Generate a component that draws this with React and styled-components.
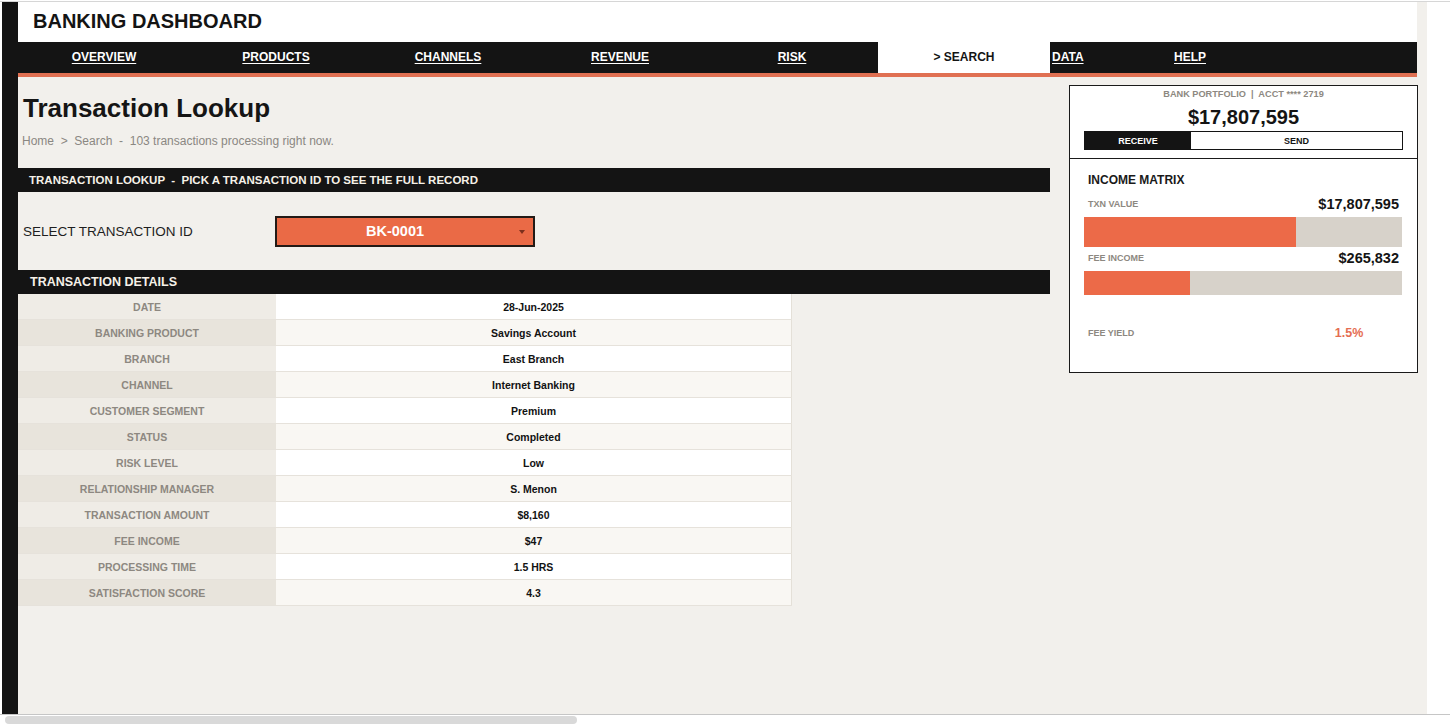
import React from "react";
import styled, { createGlobalStyle } from "styled-components";

const GlobalStyle = createGlobalStyle`
  html, body { margin: 0; padding: 0; background: #ffffff; }
  body { font-family: "Liberation Sans", Arial, sans-serif; color: #141414; }
  * { box-sizing: border-box; }
`;

const Frame = styled.div`
  width: 1450px;
  height: 725px;
  display: flex;
  flex-direction: column;
  overflow: hidden;
  background: #fff;
`;
const TopRule = styled.div`
  height: 2px;
  border-bottom: 1px solid #d6d6d6;
`;
const Workspace = styled.div`
  flex: 1;
  display: flex;
  min-height: 0;
`;
const Gutter = styled.div`
  width: 2px;
  background: #fff;
`;
const Strip = styled.div`
  width: 16px;
  background: #141414;
`;
const Sheet = styled.div`
  width: 1409px;
  background: #f2f0ec;
  display: flex;
  flex-direction: column;
`;
const RightGutter = styled.div`
  flex: 1;
  background: #fff;
`;
const Scroll = styled.div`
  height: 11px;
  border-top: 1px solid #c6c6c6;
  padding: 1px 0 0 5px;
`;
const Thumb = styled.div`
  width: 572px;
  height: 8px;
  border-radius: 4px;
  background: #d9d9d9;
`;

const Header = styled.div`
  width: 1399px;
  height: 40px;
  background: #fff;
  display: flex;
  align-items: center;
  padding: 0 0 2px 15px;
  font-size: 20px;
  font-weight: 700;
  color: #141414;
`;

const Nav = styled.nav`
  width: 1399px;
  height: 35px;
  background: #141414;
  border-bottom: 4px solid #e07052;
  display: flex;
`;
const NavItem = styled.a`
  width: ${({ $w }) => $w}px;
  display: flex;
  align-items: center;
  justify-content: ${({ $left }) => ($left ? "flex-start" : "center")};
  padding: 0 0 2px ${({ $left }) => ($left ? "2px" : "0")};
  font-size: 12px;
  font-weight: 700;
  color: ${({ $active }) => ($active ? "#141414" : "#ffffff")};
  background: ${({ $active }) => ($active ? "#ffffff" : "transparent")};
  text-decoration: ${({ $active }) => ($active ? "none" : "underline")};
  text-underline-offset: 2px;
`;

const Body = styled.div`
  display: flex;
  align-items: flex-start;
`;
const Main = styled.div`
  width: 1032px;
  display: flex;
  flex-direction: column;
`;
const Title = styled.h1`
  margin: 16px 0 0 5px;
  font-size: 26px;
  line-height: 30px;
  font-weight: 700;
  color: #151515;
`;
const Crumbs = styled.div`
  margin: 10px 0 0 4px;
  font-size: 12px;
  line-height: 16px;
  color: #8a8782;
  white-space: pre;
`;
const SectionBar = styled.div`
  height: 24px;
  background: #141414;
  color: #f6f1e8;
  display: flex;
  align-items: center;
  padding-left: ${({ $pad }) => $pad}px;
  font-size: ${({ $size }) => $size}px;
  font-weight: 700;
  white-space: pre;
  margin-top: ${({ $top }) => $top || 0}px;
`;
const SelectRow = styled.div`
  height: 78px;
  display: flex;
  align-items: center;
  padding: 1px 0 0 5px;
`;
const SelectLabel = styled.div`
  width: 252px;
  font-size: 13.5px;
  color: #1e1e1e;
`;
const Dropdown = styled.div`
  position: relative;
  width: 260px;
  height: 31px;
  background: #ea6a46;
  border: 2px solid #231a16;
  display: flex;
  align-items: center;
  justify-content: center;
  color: #fff;
  font-size: 14.5px;
  font-weight: 700;
  padding: 0 20px 1px 0;
`;
const Caret = styled.span`
  position: absolute;
  right: 8px;
  top: 12px;
  width: 0;
  height: 0;
  border-left: 3.5px solid transparent;
  border-right: 3.5px solid transparent;
  border-top: 4px solid #7c2f1c;
`;

const Table = styled.div`
  width: 774px;
  display: flex;
  flex-direction: column;
`;
const Row = styled.div`
  display: grid;
  grid-template-columns: 258px 516px;
  height: 26px;
  border-bottom: 1px solid #e6e2db;
`;
const Label = styled.div`
  background: ${({ $alt }) => ($alt ? "#e8e4dc" : "#efece6")};
  display: flex;
  align-items: center;
  justify-content: center;
  font-size: 10.5px;
  font-weight: 700;
  color: #8d8881;
`;
const Value = styled.div`
  background: ${({ $alt }) => ($alt ? "#f9f7f3" : "#ffffff")};
  border-right: 1px solid #e4e0d8;
  display: flex;
  align-items: center;
  justify-content: center;
  font-size: 10.5px;
  font-weight: 700;
  color: #121212;
`;

const Side = styled.aside`
  width: 349px;
  margin: 8px 0 0 19px;
  border: 1px solid #1a1a1a;
  background: #fff;
`;
const CardTop = styled.div`
  padding: 2px 0 8px 14px;
  display: flex;
  flex-direction: column;
  align-items: center;
  width: 333px;
`;
const Eyebrow = styled.div`
  font-size: 9.2px;
  line-height: 12px;
  font-weight: 700;
  color: #8d8881;
  white-space: pre;
`;
const Big = styled.div`
  margin-top: 5px;
  font-size: 20px;
  line-height: 24px;
  font-weight: 700;
  color: #141414;
`;
const Toggle = styled.div`
  margin-top: 2px;
  width: 319px;
  height: 19px;
  display: grid;
  grid-template-columns: 106px 1fr;
  border: 1px solid #141414;
`;
const ToggleBtn = styled.div`
  display: flex;
  align-items: center;
  justify-content: center;
  font-size: 9px;
  font-weight: 700;
  background: ${({ $on }) => ($on ? "#141414" : "#fff")};
  color: ${({ $on }) => ($on ? "#fff" : "#141414")};
`;
const Matrix = styled.div`
  border-top: 1px solid #1a1a1a;
  padding: 13px 15px 31px 14px;
  display: flex;
  flex-direction: column;
`;
const MatrixTitle = styled.div`
  padding-left: 4px;
  font-size: 12px;
  line-height: 16px;
  font-weight: 700;
  color: #1a1a1a;
`;
const MetricRow = styled.div`
  display: flex;
  align-items: center;
  justify-content: space-between;
  padding: 0 3px 0 4px;
  margin-top: ${({ $top }) => $top}px;
`;
const MetricLabel = styled.div`
  flex: ${({ $grow }) => ($grow ? 1 : "none")};
  font-size: 9px;
  font-weight: 700;
  color: #8d8881;
`;
const MetricValue = styled.div`
  font-size: 14.5px;
  line-height: 18px;
  font-weight: 700;
  color: #141414;
`;
const Track = styled.div`
  height: ${({ $h }) => $h}px;
  margin-top: ${({ $top }) => $top}px;
  background: #d7d2ca;
`;
const Fill = styled.div`
  height: 100%;
  background: #ec6a48;
`;
const YieldRow = styled.div`
  display: flex;
  align-items: center;
  padding: 0 3px 0 4px;
  margin-top: 30px;
`;
const YieldValue = styled.div`
  width: 100px;
  text-align: center;
  font-size: 12.5px;
  line-height: 16px;
  font-weight: 700;
  color: #e56d52;
`;

const navItems = [
  { t: "OVERVIEW", w: 172 },
  { t: "PRODUCTS", w: 172 },
  { t: "CHANNELS", w: 172 },
  { t: "REVENUE", w: 172 },
  { t: "RISK", w: 172 },
  { t: "> SEARCH", w: 172, active: true },
  { t: "DATA", w: 70, left: true },
  { t: "HELP", w: 140 },
];

const details = [
  ["DATE", "28-Jun-2025"],
  ["BANKING PRODUCT", "Savings Account"],
  ["BRANCH", "East Branch"],
  ["CHANNEL", "Internet Banking"],
  ["CUSTOMER SEGMENT", "Premium"],
  ["STATUS", "Completed"],
  ["RISK LEVEL", "Low"],
  ["RELATIONSHIP MANAGER", "S. Menon"],
  ["TRANSACTION AMOUNT", "$8,160"],
  ["FEE INCOME", "$47"],
  ["PROCESSING TIME", "1.5 HRS"],
  ["SATISFACTION SCORE", "4.3"],
];

const txnValue = 17807595;
const feeIncome = 265832;

export default function App() {
  return (
    <>
      <GlobalStyle />
      <Frame>
        <TopRule />
        <Workspace>
          <Gutter />
          <Strip />
          <Sheet>
            <Header>BANKING DASHBOARD</Header>
            <Nav>
              {navItems.map((n) => (
                <NavItem key={n.t} $w={n.w} $active={n.active} $left={n.left}>
                  {n.t}
                </NavItem>
              ))}
            </Nav>
            <Body>
              <Main>
                <Title>Transaction Lookup</Title>
                <Crumbs>Home  &gt;  Search  -  103 transactions processing right now.</Crumbs>
                <SectionBar $pad={11} $size={11.5} $top={19}>
                  TRANSACTION LOOKUP  -  PICK A TRANSACTION ID TO SEE THE FULL RECORD
                </SectionBar>
                <SelectRow>
                  <SelectLabel>SELECT TRANSACTION ID</SelectLabel>
                  <Dropdown>
                    BK-0001
                    <Caret />
                  </Dropdown>
                </SelectRow>
                <SectionBar $pad={12} $size={12.5}>
                  TRANSACTION DETAILS
                </SectionBar>
                <Table>
                  {details.map(([k, v], i) => (
                    <Row key={k}>
                      <Label $alt={i % 2 === 1}>{k}</Label>
                      <Value $alt={i % 2 === 1}>{v}</Value>
                    </Row>
                  ))}
                </Table>
              </Main>
              <Side>
                <CardTop>
                  <Eyebrow>BANK PORTFOLIO  |  ACCT **** 2719</Eyebrow>
                  <Big>$17,807,595</Big>
                  <Toggle>
                    <ToggleBtn $on>RECEIVE</ToggleBtn>
                    <ToggleBtn>SEND</ToggleBtn>
                  </Toggle>
                </CardTop>
                <Matrix>
                  <MatrixTitle>INCOME MATRIX</MatrixTitle>
                  <MetricRow $top={7}>
                    <MetricLabel>TXN VALUE</MetricLabel>
                    <MetricValue>${txnValue.toLocaleString("en-US")}</MetricValue>
                  </MetricRow>
                  <Track $h={30} $top={4}>
                    <Fill style={{ width: "66.7%" }} />
                  </Track>
                  <MetricRow $top={2}>
                    <MetricLabel>FEE INCOME</MetricLabel>
                    <MetricValue>${feeIncome.toLocaleString("en-US")}</MetricValue>
                  </MetricRow>
                  <Track $h={24} $top={4}>
                    <Fill style={{ width: "33.3%" }} />
                  </Track>
                  <YieldRow>
                    <MetricLabel $grow>FEE YIELD</MetricLabel>
                    <YieldValue>{((feeIncome / txnValue) * 100).toFixed(1)}%</YieldValue>
                  </YieldRow>
                </Matrix>
              </Side>
            </Body>
          </Sheet>
          <RightGutter />
        </Workspace>
        <Scroll>
          <Thumb />
        </Scroll>
      </Frame>
    </>
  );
}
